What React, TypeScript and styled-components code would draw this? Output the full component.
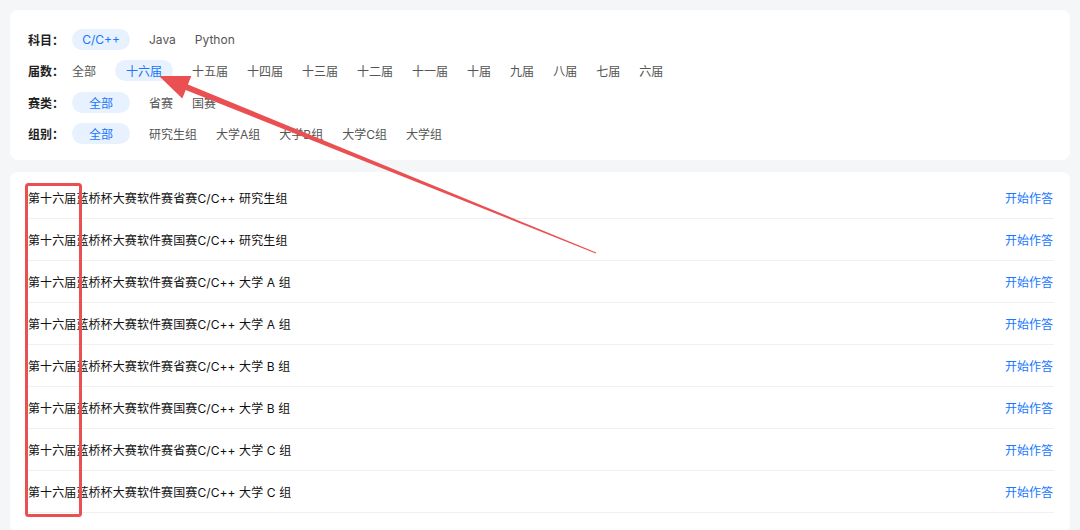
import React, { useState } from 'react'
import styled, { createGlobalStyle } from 'styled-components'

const GlobalStyle = createGlobalStyle`
    html, body {
        margin: 0;
        padding: 0;
        background: #f5f6f7;
    }
    body {
        font-family: Inter, "Noto Sans CJK SC", sans-serif;
        -webkit-font-smoothing: antialiased;
    }
`

const Page = styled.div`
    position: relative;
    display: flex;
    flex-direction: column;
    gap: 12px;
    padding: 10px 10px 0 10px;
    min-height: 520px;
    overflow: hidden;
`

const Card = styled.div`
    background: #ffffff;
    border-radius: 8px;
`

const FilterCard = styled(Card)`
    display: flex;
    flex-direction: column;
    gap: 10.5px;
    padding: 18.5px 18px 16px;
`

const FilterRow = styled.div`
    display: flex;
    align-items: center;
    height: 21px;
`

const Label = styled.span`
    width: 44px;
    flex-shrink: 0;
    font-size: 12px;
    font-weight: 700;
    color: #1f1f1f;
`

const Options = styled.div`
    display: flex;
    align-items: center;
    gap: 19px;
`

const Option = styled.span<{ $active: boolean }>`
    display: inline-flex;
    align-items: center;
    justify-content: center;
    height: 21px;
    font-size: 12px;
    border-radius: 11px;
    cursor: pointer;
    color: ${(p) => (p.$active ? '#1677ff' : '#555555')};
    background: ${(p) => (p.$active ? '#e8f1fe' : 'transparent')};
    min-width: ${(p) => (p.$active ? '58px' : '0')};
    padding: ${(p) => (p.$active ? '0 10px' : '0')};
    box-sizing: border-box;
`

const ListCard = styled(Card)`
    padding: 5px 16px 20px 18px;
`

const ListRow = styled.div`
    display: flex;
    align-items: center;
    justify-content: space-between;
    height: 41px;
    border-bottom: 1px solid #f0f0f0;
`

const Title = styled.span`
    font-size: 12px;
    color: #111111;
    letter-spacing: 0.1px;
`

const Start = styled.a`
    font-size: 12px;
    color: #1677ff;
    cursor: pointer;
    padding-right: 1px;
`

const Overlay = styled.svg`
    position: absolute;
    left: 0;
    top: 0;
    pointer-events: none;
`

const filters = [
    { key: 'subject', label: '科目：', items: ['C/C++', 'Java', 'Python'] },
    {
        key: 'session',
        label: '届数：',
        items: ['全部', '十六届', '十五届', '十四届', '十三届', '十二届', '十一届', '十届', '九届', '八届', '七届', '六届'],
    },
    { key: 'type', label: '赛类：', items: ['全部', '省赛', '国赛'] },
    { key: 'group', label: '组别：', items: ['全部', '研究生组', '大学A组', '大学B组', '大学C组', '大学组'] },
]

const papers = [
    '第十六届蓝桥杯大赛软件赛省赛C/C++ 研究生组',
    '第十六届蓝桥杯大赛软件赛国赛C/C++ 研究生组',
    '第十六届蓝桥杯大赛软件赛省赛C/C++ 大学 A 组',
    '第十六届蓝桥杯大赛软件赛国赛C/C++ 大学 A 组',
    '第十六届蓝桥杯大赛软件赛省赛C/C++ 大学 B 组',
    '第十六届蓝桥杯大赛软件赛国赛C/C++ 大学 B 组',
    '第十六届蓝桥杯大赛软件赛省赛C/C++ 大学 C 组',
    '第十六届蓝桥杯大赛软件赛国赛C/C++ 大学 C 组',
]

// tapered arrow from tail (596,253) to tip (159,76)
const arrowPoints = (() => {
    const tip = { x: 159, y: 76 }
    const tail = { x: 596, y: 253 }
    const dx = tail.x - tip.x
    const dy = tail.y - tip.y
    const len = Math.hypot(dx, dy)
    const ux = dx / len
    const uy = dy / len
    const px = uy
    const py = -ux
    const headLen = 30
    const headHalf = 12
    const base = { x: tip.x + ux * headLen, y: tip.y + uy * headLen }
    const neck = 3
    const tailHalf = 0.6
    const pts = [
        [tip.x, tip.y],
        [base.x + px * headHalf, base.y + py * headHalf],
        [base.x + px * neck, base.y + py * neck],
        [tail.x + px * tailHalf, tail.y + py * tailHalf],
        [tail.x - px * tailHalf, tail.y - py * tailHalf],
        [base.x - px * neck, base.y - py * neck],
        [base.x - px * headHalf, base.y - py * headHalf],
    ]
    return pts.map((p) => p.map((v) => v.toFixed(1)).join(',')).join(' ')
})()

export default function App() {
    const [selected, setSelected] = useState<Record<string, string>>({
        subject: 'C/C++',
        session: '十六届',
        type: '全部',
        group: '全部',
    })

    return (
        <>
            <GlobalStyle />
            <Page>
                <FilterCard>
                    {filters.map((f) => (
                        <FilterRow key={f.key}>
                            <Label>{f.label}</Label>
                            <Options>
                                {f.items.map((item) => (
                                    <Option
                                        key={item}
                                        $active={selected[f.key] === item}
                                        onClick={() => setSelected({ ...selected, [f.key]: item })}
                                    >
                                        {item}
                                    </Option>
                                ))}
                            </Options>
                        </FilterRow>
                    ))}
                </FilterCard>
                <ListCard>
                    {papers.map((p) => (
                        <ListRow key={p}>
                            <Title>{p}</Title>
                            <Start>开始作答</Start>
                        </ListRow>
                    ))}
                </ListCard>
                <Overlay width="1080" height="530" viewBox="0 0 1080 530">
                    <rect x="26.5" y="184.5" width="54" height="331" rx="2" fill="none" stroke="#ea4f52" strokeWidth="3" />
                    <polygon points={arrowPoints} fill="#ea4f52" />
                </Overlay>
            </Page>
        </>
    )
}
